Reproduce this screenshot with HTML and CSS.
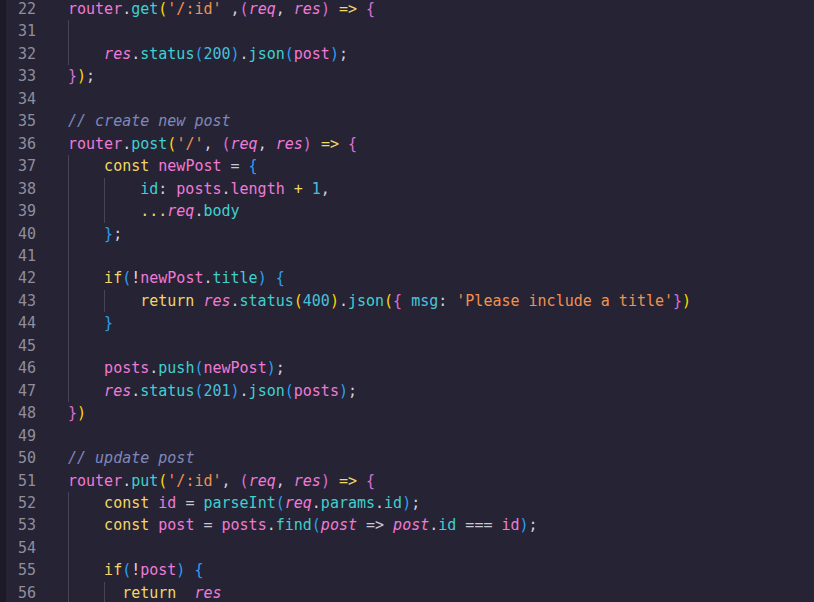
FILE: index.html
```html
<!DOCTYPE html>
<html>
<head>
<meta charset="utf-8">
<link rel="stylesheet" href="styles.css">
</head>
<body>
<div class="editor">
  <div class="strip"></div>
  <div class="lines">
    <div class="row"><span class="ln">22</span><span class="code"><span class="v">router</span><span class="p">.</span><span class="f">get</span><span class="b1">(</span><span class="s">'/:id'</span><span class="p"> ,</span><span class="b2">(</span><span class="i">req</span><span class="p">, </span><span class="i">res</span><span class="b2">)</span> <span class="k">=&gt;</span> <span class="b2">{</span></span></div>
    <div class="row"><span class="ln">31</span><span class="code"><span class="ind g"></span></span></div>
    <div class="row"><span class="ln">32</span><span class="code"><span class="ind g"></span><span class="i">res</span><span class="p">.</span><span class="f">status</span><span class="b3">(</span><span class="n">200</span><span class="b3">)</span><span class="p">.</span><span class="f">json</span><span class="b3">(</span><span class="v">post</span><span class="b3">)</span><span class="p">;</span></span></div>
    <div class="row"><span class="ln">33</span><span class="code"><span class="b2">}</span><span class="b1">)</span><span class="p">;</span></span></div>
    <div class="row"><span class="ln">34</span><span class="code"></span></div>
    <div class="row"><span class="ln">35</span><span class="code"><span class="c">// create new post</span></span></div>
    <div class="row"><span class="ln">36</span><span class="code"><span class="v">router</span><span class="p">.</span><span class="f">post</span><span class="b1">(</span><span class="s">'/'</span><span class="p">, </span><span class="b2">(</span><span class="i">req</span><span class="p">, </span><span class="i">res</span><span class="b2">)</span> <span class="k">=&gt;</span> <span class="b2">{</span></span></div>
    <div class="row"><span class="ln">37</span><span class="code"><span class="ind g"></span><span class="k">const</span> <span class="v">newPost</span> <span class="o">=</span> <span class="b3">{</span></span></div>
    <div class="row"><span class="ln">38</span><span class="code"><span class="ind g"></span><span class="ind g"></span><span class="f">id</span><span class="p">:</span> <span class="v">posts</span><span class="p">.</span><span class="v">length</span> <span class="k">+</span> <span class="n">1</span><span class="p">,</span></span></div>
    <div class="row"><span class="ln">39</span><span class="code"><span class="ind g"></span><span class="ind g"></span><span class="k">...</span><span class="i">req</span><span class="p">.</span><span class="f">body</span></span></div>
    <div class="row"><span class="ln">40</span><span class="code"><span class="ind g"></span><span class="b3">}</span><span class="p">;</span></span></div>
    <div class="row"><span class="ln">41</span><span class="code"><span class="ind g"></span></span></div>
    <div class="row"><span class="ln">42</span><span class="code"><span class="ind g"></span><span class="k">if</span><span class="b3">(</span><span class="x">!</span><span class="v">newPost</span><span class="p">.</span><span class="f">title</span><span class="b3">)</span> <span class="b3">{</span></span></div>
    <div class="row"><span class="ln">43</span><span class="code"><span class="ind g"></span><span class="ind g"></span><span class="k">return</span> <span class="i">res</span><span class="p">.</span><span class="f">status</span><span class="b1">(</span><span class="n">400</span><span class="b1">)</span><span class="p">.</span><span class="f">json</span><span class="b1">(</span><span class="b2">{</span> <span class="m">msg</span><span class="p">:</span> <span class="s">'Please include a title'</span><span class="b2">}</span><span class="b1">)</span></span></div>
    <div class="row"><span class="ln">44</span><span class="code"><span class="ind g"></span><span class="b3">}</span></span></div>
    <div class="row"><span class="ln">45</span><span class="code"><span class="ind g"></span></span></div>
    <div class="row"><span class="ln">46</span><span class="code"><span class="ind g"></span><span class="v">posts</span><span class="p">.</span><span class="f">push</span><span class="b3">(</span><span class="v">newPost</span><span class="b3">)</span><span class="p">;</span></span></div>
    <div class="row"><span class="ln">47</span><span class="code"><span class="ind g"></span><span class="i">res</span><span class="p">.</span><span class="f">status</span><span class="b3">(</span><span class="n">201</span><span class="b3">)</span><span class="p">.</span><span class="f">json</span><span class="b3">(</span><span class="v">posts</span><span class="b3">)</span><span class="p">;</span></span></div>
    <div class="row"><span class="ln">48</span><span class="code"><span class="b2">}</span><span class="b1">)</span></span></div>
    <div class="row"><span class="ln">49</span><span class="code"></span></div>
    <div class="row"><span class="ln">50</span><span class="code"><span class="c">// update post</span></span></div>
    <div class="row"><span class="ln">51</span><span class="code"><span class="v">router</span><span class="p">.</span><span class="f">put</span><span class="b1">(</span><span class="s">'/:id'</span><span class="p">, </span><span class="b2">(</span><span class="i">req</span><span class="p">, </span><span class="i">res</span><span class="b2">)</span> <span class="k">=&gt;</span> <span class="b2">{</span></span></div>
    <div class="row"><span class="ln">52</span><span class="code"><span class="ind g"></span><span class="k">const</span> <span class="v">id</span> <span class="o">=</span> <span class="f">parseInt</span><span class="b3">(</span><span class="i">req</span><span class="p">.</span><span class="f">params</span><span class="p">.</span><span class="f">id</span><span class="b3">)</span><span class="p">;</span></span></div>
    <div class="row"><span class="ln">53</span><span class="code"><span class="ind g"></span><span class="k">const</span> <span class="v">post</span> <span class="o">=</span> <span class="v">posts</span><span class="p">.</span><span class="f">find</span><span class="b3">(</span><span class="i">post</span> <span class="o">=&gt;</span> <span class="i">post</span><span class="p">.</span><span class="f">id</span> <span class="o">===</span> <span class="v">id</span><span class="b3">)</span><span class="p">;</span></span></div>
    <div class="row"><span class="ln">54</span><span class="code"><span class="ind g"></span></span></div>
    <div class="row"><span class="ln">55</span><span class="code"><span class="ind g"></span><span class="k">if</span><span class="b3">(</span><span class="x">!</span><span class="v">post</span><span class="b3">)</span> <span class="b3">{</span></span></div>
    <div class="row"><span class="ln">56</span><span class="code"><span class="ind g"></span><span class="ind half g"></span><span class="k">return</span>  <span class="i">res</span></span></div>
  </div>
</div>
</body>
</html>
```

FILE: styles.css
```css
html, body {
  margin: 0;
  padding: 0;
  background: #262335;
  height: 100%;
  overflow: hidden;
}

.editor {
  display: flex;
  height: 100%;
  font-family: "DejaVu Sans Mono", "Liberation Mono", monospace;
  font-size: 15px;
  color: #d4d2dc;
}

.strip {
  width: 6px;
  flex: none;
  background: #1c1a27;
}

.lines {
  margin-top: -2px;
  flex: 1;
}

.row {
  display: flex;
  height: 22.46px;
  line-height: 22.46px;
  white-space: pre;
}

.ln {
  width: 30px;
  flex: none;
  text-align: right;
  color: #908e9c;
  margin-right: 32px;
}

.code {
  display: block;
  white-space: pre;
  height: 22.46px;
}

.ind {
  display: inline-block;
  width: 4ch;
  height: 22.46px;
  vertical-align: top;
}

.ind.half {
  width: 2ch;
}

.ind.g {
  box-shadow: inset 1px 0 0 #46435a;
}

.v { color: #f07ad6; }
.i { color: #f07ad6; font-style: italic; }
.f { color: #3fd0cf; }
.m { color: #4cc3dc; }
.n { color: #48bfd8; }
.s { color: #f09250; }
.k { color: #f2d764; }
.o { color: #c9c7d4; }
.x { color: #e6d6ea; }
.p { color: #d4d2dc; }
.c { color: #8088b8; font-style: italic; }
.b1 { color: #ffd700; }
.b2 { color: #da70d6; }
.b3 { color: #2d9ff2; }
```
